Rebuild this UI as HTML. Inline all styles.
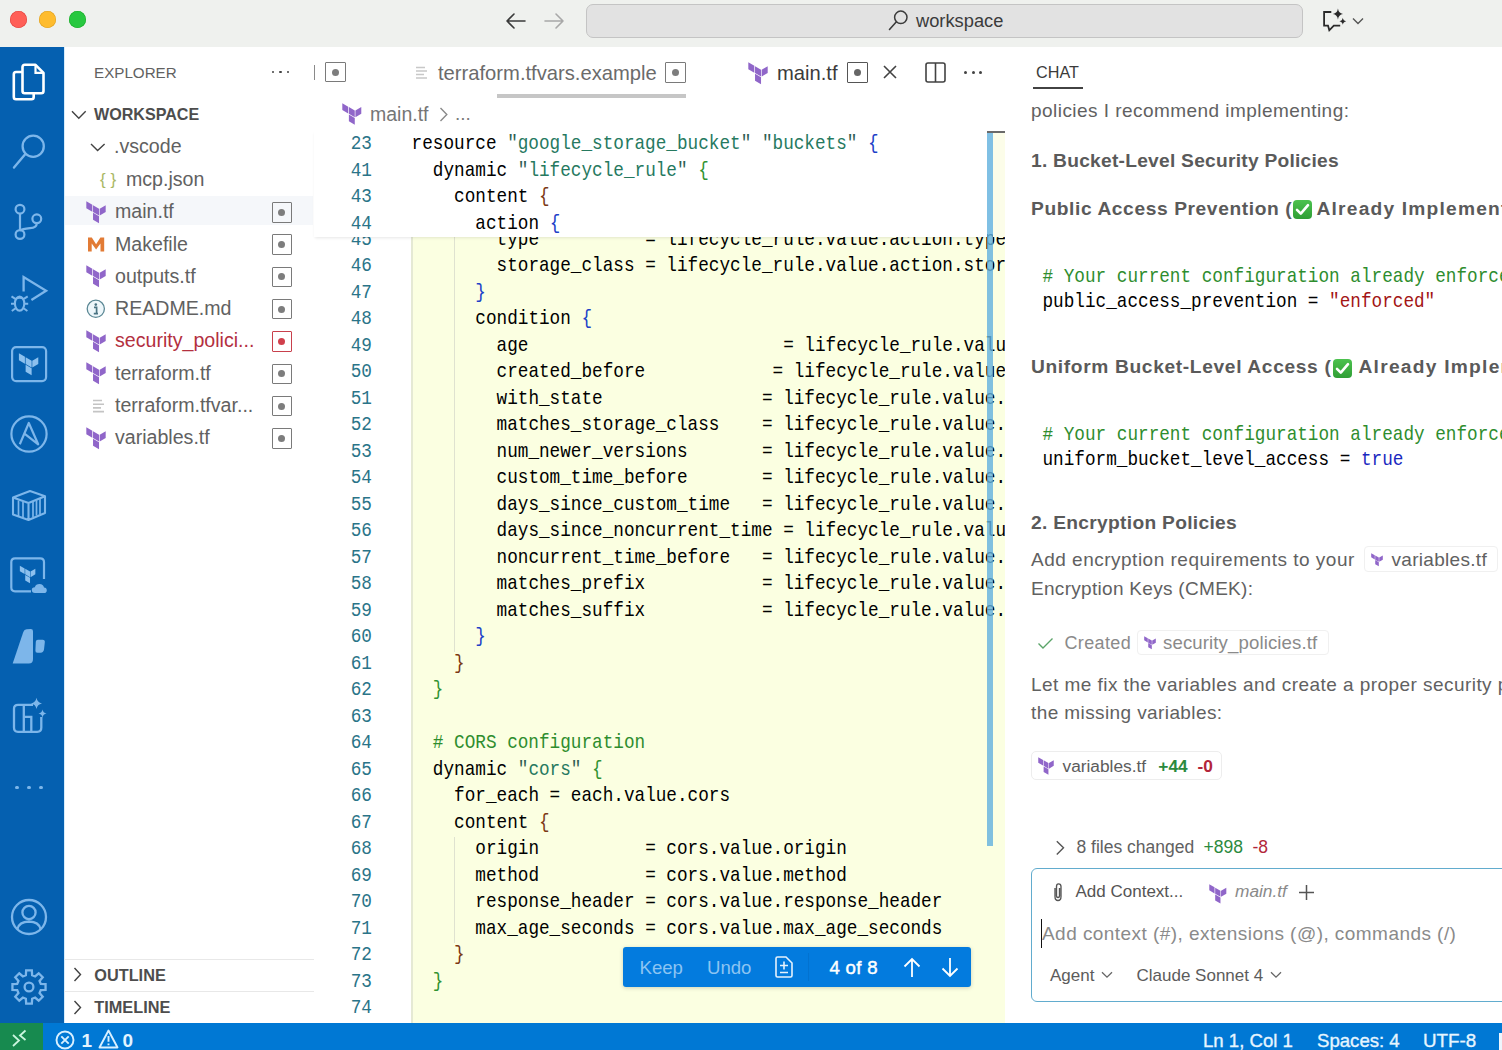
<!DOCTYPE html>
<html><head><meta charset="utf-8">
<style>
*{box-sizing:border-box;margin:0;padding:0}
html,body{width:1502px;height:1050px;overflow:hidden;background:#fff;font-family:"Liberation Sans",sans-serif}
body{position:relative}
.a{position:absolute}
.t{white-space:pre}
svg{overflow:visible}
</style></head><body>
<div class="a" style="left:0px;top:0px;width:1502px;height:47px;background:#eff1ee"></div>
<div class="a" style="left:9.6px;top:10.9px;width:17.4px;height:17.4px;border-radius:50%;background:#ff5f57;box-shadow:inset 0 0 0 0.6px #e0443e"></div>
<div class="a" style="left:39.1px;top:10.9px;width:17.4px;height:17.4px;border-radius:50%;background:#febc2e;box-shadow:inset 0 0 0 0.6px #dea123"></div>
<div class="a" style="left:68.5px;top:10.9px;width:17.4px;height:17.4px;border-radius:50%;background:#28c840;box-shadow:inset 0 0 0 0.6px #1aab29"></div>
<svg class="a" style="left:505px;top:12px;" width="22" height="18" viewBox="0 0 22 18"><path d="M2 9 H20 M9 2 L2 9 L9 16" fill="none" stroke="#3a3a3a" stroke-width="1.6" stroke-linecap="round" stroke-linejoin="round"/></svg>
<svg class="a" style="left:543px;top:12px;" width="22" height="18" viewBox="0 0 22 18"><path d="M2 9 H20 M13 2 L20 9 L13 16" fill="none" stroke="#a8a8a8" stroke-width="1.6" stroke-linecap="round" stroke-linejoin="round"/></svg>
<div class="a" style="left:585.5px;top:3.5px;width:717px;height:34px;background:#e2e2e2;border:1.5px solid #c4c4c4;border-radius:7px"></div>
<svg class="a" style="left:888px;top:9px;" width="20" height="22" viewBox="0 0 20 22"><circle cx="12.8" cy="8.3" r="6.2" fill="none" stroke="#3b3b3b" stroke-width="1.5"/><path d="M8.4 12.8 L1.5 20.5" stroke="#3b3b3b" stroke-width="1.6" stroke-linecap="round"/></svg>
<div class="a t" style="left:916px;top:8.76px;font-size:18.3px;line-height:23.79px;color:#3b3b3b;font-weight:400;font-family:'Liberation Sans';">workspace</div>
<svg class="a" style="left:1323px;top:8px;" width="26" height="24" viewBox="0 0 26 24"><path d="M8.3 4 H1.1 V17.6 H5 L6.3 22.3 L10.8 17.6 H17.2" fill="none" stroke="#2a2a2a" stroke-width="1.8" stroke-linejoin="miter"/><path d="M14.95 0.6 Q15.6 5.3 20 6 Q15.6 6.7 14.95 11.4 Q14.3 6.7 9.9 6 Q14.3 5.3 14.95 0.6Z" fill="#2a2a2a"/><path d="M19.8 9.8 Q20.2 12.8 23.2 13.3 Q20.2 13.8 19.8 16.8 Q19.4 13.8 16.4 13.3 Q19.4 12.8 19.8 9.8Z" fill="#2a2a2a"/></svg>
<svg class="a" style="left:1352px;top:17px;" width="12" height="8" viewBox="0 0 12 8"><path d="M1 1.5 L6 6.5 L11 1.5" fill="none" stroke="#555" stroke-width="1.4"/></svg>
<div class="a" style="left:0px;top:47px;width:64px;height:976px;background:#0560b0"></div>
<svg class="a" style="left:12px;top:63px;" width="34" height="38" viewBox="0 0 34 38"><path d="M10.5 9 H4 Q1.8 9 1.8 11.2 V34 Q1.8 36.2 4 36.2 H19.5 Q21.7 36.2 21.7 34 V30.5" fill="none" stroke="#fff" stroke-width="2.6"/><path d="M12.8 1.8 H23.5 L31.5 9.8 V28 Q31.5 30.3 29.2 30.3 H12.8 Q10.5 30.3 10.5 28 V4.1 Q10.5 1.8 12.8 1.8Z" fill="none" stroke="#fff" stroke-width="2.6" stroke-linejoin="round"/><path d="M23.5 1.8 V9.8 H31.5" fill="none" stroke="#fff" stroke-width="2.2"/></svg>
<svg class="a" style="left:12px;top:133px;" width="36" height="38" viewBox="0 0 36 38"><circle cx="21.2" cy="13.2" r="10.6" fill="none" stroke="#7db6ea" stroke-width="2.3"/><path d="M13.6 20.8 L2 34.6" stroke="#7db6ea" stroke-width="2.4" stroke-linecap="round"/></svg>
<svg class="a" style="left:13px;top:203px;" width="32" height="40" viewBox="0 0 32 40"><circle cx="7" cy="6.2" r="4.4" fill="none" stroke="#7db6ea" stroke-width="2.2"/><circle cx="7" cy="31.5" r="4.4" fill="none" stroke="#7db6ea" stroke-width="2.2"/><circle cx="23.8" cy="15.8" r="4.4" fill="none" stroke="#7db6ea" stroke-width="2.2"/><path d="M7 10.6 V27.1 M23.8 20.2 Q23.8 24.5 17 25.2 Q9 26 7 27.5" fill="none" stroke="#7db6ea" stroke-width="2.2"/></svg>
<svg class="a" style="left:0px;top:265px;" width="64" height="55" viewBox="0 0 64 55"><path d="M23.6 26.4 V12 L46.1 25.7 L31.4 35" fill="none" stroke="#7db6ea" stroke-width="2.3" stroke-linejoin="miter"/><ellipse cx="19.6" cy="38.6" rx="4.7" ry="7" fill="none" stroke="#7db6ea" stroke-width="2.1"/><path d="M15.5 34.3 Q19.6 31.3 23.7 34.3 M11.5 31.3 L15.3 33.8 M11 38.8 H14.9 M11.8 46 L15.6 43.3 M27.7 31.3 L23.9 33.8 M28.2 38.8 H24.3 M27.4 46 L23.6 43.3" fill="none" stroke="#7db6ea" stroke-width="2"/></svg>
<svg class="a" style="left:11px;top:346px;" width="37" height="37" viewBox="0 0 37 37"><rect x="1.1" y="1.1" width="34" height="34" rx="4" fill="none" stroke="#7db6ea" stroke-width="2.2"/><path transform="translate(7.6 7) scale(0.3125)" d="M1 1 V23.1 L20.2 34.2 V12.1Z M22.5 13.3 L41.7 24.4 V46.5 L22.5 35.4Z M43.8 24.4 V46.5 L63 35.4 V13.3Z M22.5 37.8 V59.9 L41.7 71 V48.9Z" fill="#8cc0ee"/></svg>
<svg class="a" style="left:9px;top:414px;" width="40" height="40" viewBox="0 0 40 40"><circle cx="20" cy="20" r="17.6" fill="none" stroke="#7db6ea" stroke-width="2.2"/><path d="M10.8 30.3 L19.8 9 L29.2 30.3 L15.8 19.8" fill="none" stroke="#7db6ea" stroke-width="2.2" stroke-linejoin="round"/></svg>
<svg class="a" style="left:10px;top:487px;" width="38" height="38" viewBox="0 0 38 38"><path d="M3 10.5 L20 4 L35 9.2 V26 L18.5 33 L3 27.5Z M3 10.5 L18.5 16 L35 9.2 M18.5 16 V33" fill="none" stroke="#7db6ea" stroke-width="2.1" stroke-linejoin="round"/><path d="M8.5 13.5 V29.5 M13 15 V31 M23 14.5 V30 M26.5 13.2 V28.6 M30 11.8 V27.2" stroke="#7db6ea" stroke-width="1.7"/></svg>
<svg class="a" style="left:10px;top:557px;" width="40" height="40" viewBox="0 0 40 40"><path d="M34 22 V5 Q34 1.3 30.3 1.3 H5 Q1.3 1.3 1.3 5 V30.6 Q1.3 34.3 5 34.3 H21" fill="none" stroke="#7db6ea" stroke-width="2.2"/><path transform="translate(9.6 8.5) scale(0.25)" d="M1 1 V23.1 L20.2 34.2 V12.1Z M22.5 13.3 L41.7 24.4 V46.5 L22.5 35.4Z M43.8 24.4 V46.5 L63 35.4 V13.3Z M22.5 37.8 V59.9 L41.7 71 V48.9Z" fill="#8cc0ee"/><path d="M25 36 Q21.8 36 21.8 33 Q21.8 30.3 24.8 30.2 Q25.8 27 29.5 27 Q33.3 27.2 34 30.4 Q36.8 30.6 36.8 33.2 Q36.8 36 34 36Z" fill="#7db6ea"/></svg>
<svg class="a" style="left:10px;top:627px;" width="40" height="40" viewBox="0 0 40 40"><path d="M2.7 36.5 L13.3 5 Q14.2 2.6 16.6 2.3 L20.6 1.9 Q23 1.8 23 4.2 V32 Q23 36.5 18.8 36.5 Z" fill="#7db6ea"/><path d="M27.8 12.8 H32.6 Q35.2 12.8 34.8 15.4 L34 22.6 Q33.6 25.7 30.6 25.7 H27.4 Q25.2 25.7 25.4 23.4 L25.8 14.8 Q26 12.8 27.8 12.8Z" fill="#7db6ea"/></svg>
<svg class="a" style="left:11px;top:697px;" width="38" height="40" viewBox="0 0 38 40"><path d="M22 7.8 H7 Q3 7.8 3 11.8 V30.8 Q3 34.8 7 34.8 H26.3 Q30.3 34.8 30.3 30.8 V20" fill="none" stroke="#7db6ea" stroke-width="2.3"/><path d="M12.8 7.8 V34.8 M12.8 19.8 H20.3 V34.8" fill="none" stroke="#7db6ea" stroke-width="2.3"/><path d="M25.5 0.8 Q26.3 5.6 31 6.4 Q26.3 7.2 25.5 12 Q24.7 7.2 20 6.4 Q24.7 5.6 25.5 0.8Z" fill="#7db6ea"/><path d="M31.5 12.5 Q32.1 16 35.5 16.6 Q32.1 17.2 31.5 20.7 Q30.9 17.2 27.5 16.6 Q30.9 16 31.5 12.5Z" fill="#7db6ea"/></svg>
<div class="a" style="left:15.4px;top:786.2px;width:3.2px;height:3.2px;background:#7db6ea;border-radius:50%"></div>
<div class="a" style="left:27.4px;top:786.2px;width:3.2px;height:3.2px;background:#7db6ea;border-radius:50%"></div>
<div class="a" style="left:39.4px;top:786.2px;width:3.2px;height:3.2px;background:#7db6ea;border-radius:50%"></div>
<svg class="a" style="left:10px;top:898px;" width="38" height="38" viewBox="0 0 38 38"><circle cx="19" cy="19" r="17" fill="none" stroke="#7db6ea" stroke-width="2.3"/><circle cx="19" cy="14.5" r="6.6" fill="none" stroke="#7db6ea" stroke-width="2.3"/><path d="M7.5 31 Q9 23.8 19 23.5 Q29 23.8 30.5 31" fill="none" stroke="#7db6ea" stroke-width="2.3"/></svg>
<svg class="a" style="left:10px;top:968px;" width="38" height="38" viewBox="0 0 38 38"><polygon points="15.86,7.21 16.16,2.44 21.84,2.44 22.14,7.21 25.12,8.45 28.70,5.28 32.72,9.30 29.55,12.88 30.79,15.86 35.56,16.16 35.56,21.84 30.79,22.14 29.55,25.12 32.72,28.70 28.70,32.72 25.12,29.55 22.14,30.79 21.84,35.56 16.16,35.56 15.86,30.79 12.88,29.55 9.30,32.72 5.28,28.70 8.45,25.12 7.21,22.14 2.44,21.84 2.44,16.16 7.21,15.86 8.45,12.88 5.28,9.30 9.30,5.28 12.88,8.45" fill="none" stroke="#7db6ea" stroke-width="2.3" stroke-linejoin="miter" transform="rotate(0 19 19)"/><circle cx="19" cy="19" r="4.4" fill="none" stroke="#7db6ea" stroke-width="2.3"/></svg>
<div class="a" style="left:64px;top:47px;width:250px;height:976px;background:#fff"></div>
<div class="a" style="left:64px;top:47px;width:1.2px;height:976px;background:#d6ecfb"></div>
<div class="a t" style="left:94px;top:63.05px;font-size:15.2px;line-height:19.76px;color:#616161;font-weight:400;font-family:'Liberation Sans';">EXPLORER</div>
<div class="a" style="left:271.6px;top:70.5px;width:2.8px;height:2.8px;background:#424242;border-radius:50%"></div>
<div class="a" style="left:279.1px;top:70.5px;width:2.8px;height:2.8px;background:#424242;border-radius:50%"></div>
<div class="a" style="left:286.6px;top:70.5px;width:2.8px;height:2.8px;background:#424242;border-radius:50%"></div>
<svg class="a" style="left:71px;top:110px;" width="16" height="10" viewBox="0 0 16 10"><path d="M1 1.3 L7.8 8.2 L14.7 1.3" fill="none" stroke="#424242" stroke-width="1.4"/></svg>
<div class="a t" style="left:94px;top:103.96px;font-size:16.1px;line-height:20.93px;color:#4d4d4d;font-weight:700;font-family:'Liberation Sans';">WORKSPACE</div>
<svg class="a" style="left:90px;top:142.5px;" width="16" height="10" viewBox="0 0 16 10"><path d="M1 1 L7.6 7.5 L14.6 1" fill="none" stroke="#424242" stroke-width="1.4"/></svg>
<div class="a t" style="left:114px;top:134.47px;font-size:19.6px;line-height:25.48px;color:#616161;font-weight:400;font-family:'Liberation Sans';">.vscode</div>
<div class="a t" style="left:100px;top:168.56px;font-size:17px;line-height:22.1px;color:#aab865;font-weight:400;font-family:'Liberation Sans';">{ }</div>
<div class="a t" style="left:126px;top:166.97px;font-size:19.6px;line-height:25.48px;color:#616161;font-weight:400;font-family:'Liberation Sans';">mcp.json</div>
<div class="a" style="left:65px;top:196px;width:248px;height:29px;background:#f5f7fa"></div>
<svg class="a" style="left:85.8px;top:200.5px" width="20.00" height="22.50" viewBox="0 0 64 72"><path d="M1 1 V23.1 L20.2 34.2 V12.1Z M22.5 13.3 L41.7 24.4 V46.5 L22.5 35.4Z M43.8 24.4 V46.5 L63 35.4 V13.3Z M22.5 37.8 V59.9 L41.7 71 V48.9Z" fill="#9066c9"/></svg>
<div class="a t" style="left:115px;top:199.27px;font-size:19.6px;line-height:25.48px;color:#616161;font-weight:400;font-family:'Liberation Sans';">main.tf</div>
<div class="a" style="left:271.5px;top:202.0px;width:20.5px;height:20.5px;border:1.6px solid #7a7a7a;border-radius:1px"></div>
<div class="a" style="left:278.25px;top:208.75px;width:7px;height:7px;border-radius:50%;background:#7d7d7d"></div>
<svg class="a" style="left:88px;top:236.5px;" width="16.2" height="14.4" viewBox="0 0 16.2 14.4"><path d="M0 14.4 V0.4 H3.8 L8.1 7.2 L12.4 0.4 H16.2 V14.4 H12.5 V6.6 L8.1 12.6 L3.7 6.6 V14.4 Z" fill="#e27b35"/></svg>
<div class="a t" style="left:115px;top:231.57px;font-size:19.6px;line-height:25.48px;color:#616161;font-weight:400;font-family:'Liberation Sans';">Makefile</div>
<div class="a" style="left:271.5px;top:234.29999999999998px;width:20.5px;height:20.5px;border:1.6px solid #7a7a7a;border-radius:1px"></div>
<div class="a" style="left:278.25px;top:241.04999999999998px;width:7px;height:7px;border-radius:50%;background:#7d7d7d"></div>
<svg class="a" style="left:85.8px;top:265.09999999999997px" width="20.00" height="22.50" viewBox="0 0 64 72"><path d="M1 1 V23.1 L20.2 34.2 V12.1Z M22.5 13.3 L41.7 24.4 V46.5 L22.5 35.4Z M43.8 24.4 V46.5 L63 35.4 V13.3Z M22.5 37.8 V59.9 L41.7 71 V48.9Z" fill="#9066c9"/></svg>
<div class="a t" style="left:115px;top:263.87px;font-size:19.6px;line-height:25.48px;color:#616161;font-weight:400;font-family:'Liberation Sans';">outputs.tf</div>
<div class="a" style="left:271.5px;top:266.59999999999997px;width:20.5px;height:20.5px;border:1.6px solid #7a7a7a;border-radius:1px"></div>
<div class="a" style="left:278.25px;top:273.34999999999997px;width:7px;height:7px;border-radius:50%;background:#7d7d7d"></div>
<svg class="a" style="left:86px;top:299.4px;" width="20" height="20" viewBox="0 0 20 20"><circle cx="9.8" cy="9.8" r="8.6" fill="#eef7fb" stroke="#5a8794" stroke-width="1.3"/><circle cx="9.8" cy="5.6" r="1.3" fill="#4a7483"/><path d="M8 8.4 H10.6 V14.3 M7.8 14.6 H12" fill="none" stroke="#4a7483" stroke-width="1.7"/></svg>
<div class="a t" style="left:115px;top:296.17px;font-size:19.6px;line-height:25.48px;color:#616161;font-weight:400;font-family:'Liberation Sans';">README.md</div>
<div class="a" style="left:271.5px;top:298.9px;width:20.5px;height:20.5px;border:1.6px solid #7a7a7a;border-radius:1px"></div>
<div class="a" style="left:278.25px;top:305.65px;width:7px;height:7px;border-radius:50%;background:#7d7d7d"></div>
<svg class="a" style="left:85.8px;top:329.7px" width="20.00" height="22.50" viewBox="0 0 64 72"><path d="M1 1 V23.1 L20.2 34.2 V12.1Z M22.5 13.3 L41.7 24.4 V46.5 L22.5 35.4Z M43.8 24.4 V46.5 L63 35.4 V13.3Z M22.5 37.8 V59.9 L41.7 71 V48.9Z" fill="#9066c9"/></svg>
<div class="a t" style="left:115px;top:328.47px;font-size:19.6px;line-height:25.48px;color:#b3303f;font-weight:400;font-family:'Liberation Sans';">security_polici...</div>
<div class="a" style="left:271.5px;top:331.2px;width:20.5px;height:20.5px;border:1.6px solid #c8404c;border-radius:1px"></div>
<div class="a" style="left:278.25px;top:337.95px;width:7px;height:7px;border-radius:50%;background:#d0404c"></div>
<svg class="a" style="left:85.8px;top:362.0px" width="20.00" height="22.50" viewBox="0 0 64 72"><path d="M1 1 V23.1 L20.2 34.2 V12.1Z M22.5 13.3 L41.7 24.4 V46.5 L22.5 35.4Z M43.8 24.4 V46.5 L63 35.4 V13.3Z M22.5 37.8 V59.9 L41.7 71 V48.9Z" fill="#9066c9"/></svg>
<div class="a t" style="left:115px;top:360.77px;font-size:19.6px;line-height:25.48px;color:#616161;font-weight:400;font-family:'Liberation Sans';">terraform.tf</div>
<div class="a" style="left:271.5px;top:363.5px;width:20.5px;height:20.5px;border:1.6px solid #7a7a7a;border-radius:1px"></div>
<div class="a" style="left:278.25px;top:370.25px;width:7px;height:7px;border-radius:50%;background:#7d7d7d"></div>
<svg class="a" style="left:92px;top:398.8px;" width="14" height="14" viewBox="0 0 14 14"><path d="M1 1.5 H10 M1 5.2 H12 M1 8.9 H9 M1 12.6 H12" stroke="#c4c4c4" stroke-width="1.6"/></svg>
<div class="a t" style="left:115px;top:393.07px;font-size:19.6px;line-height:25.48px;color:#616161;font-weight:400;font-family:'Liberation Sans';">terraform.tfvar...</div>
<div class="a" style="left:271.5px;top:395.8px;width:20.5px;height:20.5px;border:1.6px solid #7a7a7a;border-radius:1px"></div>
<div class="a" style="left:278.25px;top:402.55px;width:7px;height:7px;border-radius:50%;background:#7d7d7d"></div>
<svg class="a" style="left:85.8px;top:426.59999999999997px" width="20.00" height="22.50" viewBox="0 0 64 72"><path d="M1 1 V23.1 L20.2 34.2 V12.1Z M22.5 13.3 L41.7 24.4 V46.5 L22.5 35.4Z M43.8 24.4 V46.5 L63 35.4 V13.3Z M22.5 37.8 V59.9 L41.7 71 V48.9Z" fill="#9066c9"/></svg>
<div class="a t" style="left:115px;top:425.37px;font-size:19.6px;line-height:25.48px;color:#616161;font-weight:400;font-family:'Liberation Sans';">variables.tf</div>
<div class="a" style="left:271.5px;top:428.09999999999997px;width:20.5px;height:20.5px;border:1.6px solid #7a7a7a;border-radius:1px"></div>
<div class="a" style="left:278.25px;top:434.84999999999997px;width:7px;height:7px;border-radius:50%;background:#7d7d7d"></div>
<div class="a" style="left:64px;top:958.5px;width:250px;height:1px;background:#e8e8e8"></div>
<div class="a" style="left:64px;top:990.8px;width:250px;height:1px;background:#e8e8e8"></div>
<svg class="a" style="left:73px;top:967px;" width="10" height="16" viewBox="0 0 10 16"><path d="M1.5 1 L7.5 7.5 L1.5 14" fill="none" stroke="#424242" stroke-width="1.4"/></svg>
<div class="a t" style="left:94.3px;top:964.76px;font-size:16.3px;line-height:21.19px;color:#4d4d4d;font-weight:700;font-family:'Liberation Sans';">OUTLINE</div>
<svg class="a" style="left:73px;top:999.5px;" width="10" height="16" viewBox="0 0 10 16"><path d="M1.5 1 L7.5 7.5 L1.5 14" fill="none" stroke="#424242" stroke-width="1.4"/></svg>
<div class="a t" style="left:94.3px;top:997.16px;font-size:16.3px;line-height:21.19px;color:#4d4d4d;font-weight:700;font-family:'Liberation Sans';">TIMELINE</div>
<div class="a" style="left:314px;top:47px;width:691px;height:976px;background:#fff"></div>
<div class="a" style="left:313.5px;top:65px;width:1.5px;height:14.5px;background:#8a8a8a"></div>
<div class="a" style="left:325.2px;top:61.8px;width:20.5px;height:20.5px;border:1.6px solid #7a7a7a;border-radius:1px"></div>
<div class="a" style="left:331.95px;top:68.55px;width:7px;height:7px;border-radius:50%;background:#7d7d7d"></div>
<svg class="a" style="left:415px;top:65.5px;" width="14" height="14" viewBox="0 0 14 14"><path d="M1 1.5 H10 M1 5 H12 M1 8.5 H9 M1 12 H12" stroke="#c8c8c8" stroke-width="1.6"/></svg>
<div class="a t" style="left:438px;top:59.57px;font-size:20.2px;line-height:26.26px;color:#6b6b6b;font-weight:400;font-family:'Liberation Sans';">terraform.tfvars.example</div>
<div class="a" style="left:665.3px;top:62.3px;width:20.5px;height:20.5px;border:1.6px solid #7a7a7a;border-radius:1px"></div>
<div class="a" style="left:672.05px;top:69.05px;width:7px;height:7px;border-radius:50%;background:#7d7d7d"></div>
<div class="a" style="left:496.5px;top:93.8px;width:189.5px;height:4px;background:#c6c6c6"></div>
<svg class="a" style="left:747.5px;top:61.7px" width="20.00" height="22.50" viewBox="0 0 64 72"><path d="M1 1 V23.1 L20.2 34.2 V12.1Z M22.5 13.3 L41.7 24.4 V46.5 L22.5 35.4Z M43.8 24.4 V46.5 L63 35.4 V13.3Z M22.5 37.8 V59.9 L41.7 71 V48.9Z" fill="#9066c9"/></svg>
<div class="a t" style="left:777px;top:59.57px;font-size:20.2px;line-height:26.26px;color:#3b3b3b;font-weight:400;font-family:'Liberation Sans';">main.tf</div>
<div class="a" style="left:847px;top:62.3px;width:20.5px;height:20.5px;border:1.6px solid #555;border-radius:1px"></div>
<div class="a" style="left:853.75px;top:69.05px;width:7px;height:7px;border-radius:50%;background:#666"></div>
<svg class="a" style="left:882.5px;top:65px;" width="14" height="14" viewBox="0 0 14 14"><path d="M1 1 L13 13 M13 1 L1 13" stroke="#424242" stroke-width="1.6"/></svg>
<svg class="a" style="left:925px;top:61.5px;" width="21" height="21" viewBox="0 0 21 21"><rect x="1" y="1" width="19" height="19" rx="2" fill="none" stroke="#424242" stroke-width="1.6"/><path d="M10.5 1 V20" stroke="#424242" stroke-width="1.6"/></svg>
<div class="a" style="left:964.0px;top:70.5px;width:3px;height:3px;background:#424242;border-radius:50%"></div>
<div class="a" style="left:971.5px;top:70.5px;width:3px;height:3px;background:#424242;border-radius:50%"></div>
<div class="a" style="left:979.0px;top:70.5px;width:3px;height:3px;background:#424242;border-radius:50%"></div>
<svg class="a" style="left:342px;top:102.5px" width="19.60" height="22.05" viewBox="0 0 64 72"><path d="M1 1 V23.1 L20.2 34.2 V12.1Z M22.5 13.3 L41.7 24.4 V46.5 L22.5 35.4Z M43.8 24.4 V46.5 L63 35.4 V13.3Z M22.5 37.8 V59.9 L41.7 71 V48.9Z" fill="#9066c9"/></svg>
<div class="a t" style="left:370px;top:102.17px;font-size:19.5px;line-height:25.35px;color:#767676;font-weight:400;font-family:'Liberation Sans';">main.tf</div>
<svg class="a" style="left:439px;top:106.5px;" width="10" height="16" viewBox="0 0 10 16"><path d="M1.5 1 L7.8 7.5 L1.5 14" fill="none" stroke="#8a8a8a" stroke-width="1.4"/></svg>
<div class="a t" style="left:455px;top:102.47px;font-size:19px;line-height:24.7px;color:#7a7a7a;font-weight:400;font-family:'Liberation Sans';">...</div>
<div class="a" style="left:411px;top:237px;width:594px;height:786px;background:#fbffe1"></div>
<div class="a" style="left:411px;top:237px;width:2px;height:786px;background:#e5e9d4"></div>
<div class="a" style="left:453.8px;top:237px;width:1px;height:414.79999999999995px;background:#dfe2d0"></div>
<div class="a" style="left:453.8px;top:837.3px;width:1px;height:106.0px;background:#dfe2d0"></div>
<div class="a" style="left:314px;top:130px;width:691px;height:893px;overflow:hidden">
<div class="a t" style="left:36.76px;top:98.89px;font-size:17.700px;line-height:23.01px;color:#2a7488;font-family:'Liberation Mono';transform:scaleY(1.12);transform-origin:0 16.21px">45</div>
<div class="a t" style="left:182.56px;top:98.89px;font-size:17.7px;line-height:23.01px;color:#000;font-weight:400;font-family:'Liberation Mono';transform:scaleY(1.12);transform-origin:0 16.21px;"><span style="color:#000000">type          = lifecycle_rule.value.action.type</span></div>
<div class="a t" style="left:36.76px;top:125.39px;font-size:17.700px;line-height:23.01px;color:#2a7488;font-family:'Liberation Mono';transform:scaleY(1.12);transform-origin:0 16.21px">46</div>
<div class="a t" style="left:182.56px;top:125.39px;font-size:17.7px;line-height:23.01px;color:#000;font-weight:400;font-family:'Liberation Mono';transform:scaleY(1.12);transform-origin:0 16.21px;"><span style="color:#000000">storage_class = lifecycle_rule.value.action.storage_class</span></div>
<div class="a t" style="left:36.76px;top:151.89px;font-size:17.700px;line-height:23.01px;color:#2a7488;font-family:'Liberation Mono';transform:scaleY(1.12);transform-origin:0 16.21px">47</div>
<div class="a t" style="left:161.32px;top:151.89px;font-size:17.7px;line-height:23.01px;color:#000;font-weight:400;font-family:'Liberation Mono';transform:scaleY(1.12);transform-origin:0 16.21px;"><span style="color:#2040c8">}</span></div>
<div class="a t" style="left:36.76px;top:178.39px;font-size:17.700px;line-height:23.01px;color:#2a7488;font-family:'Liberation Mono';transform:scaleY(1.12);transform-origin:0 16.21px">48</div>
<div class="a t" style="left:161.32px;top:178.39px;font-size:17.7px;line-height:23.01px;color:#000;font-weight:400;font-family:'Liberation Mono';transform:scaleY(1.12);transform-origin:0 16.21px;"><span style="color:#000000">condition </span><span style="color:#2040c8">{</span></div>
<div class="a t" style="left:36.76px;top:204.89px;font-size:17.700px;line-height:23.01px;color:#2a7488;font-family:'Liberation Mono';transform:scaleY(1.12);transform-origin:0 16.21px">49</div>
<div class="a t" style="left:182.56px;top:204.89px;font-size:17.7px;line-height:23.01px;color:#000;font-weight:400;font-family:'Liberation Mono';transform:scaleY(1.12);transform-origin:0 16.21px;"><span style="color:#000000">age                        = lifecycle_rule.value.condition.age</span></div>
<div class="a t" style="left:36.76px;top:231.39px;font-size:17.700px;line-height:23.01px;color:#2a7488;font-family:'Liberation Mono';transform:scaleY(1.12);transform-origin:0 16.21px">50</div>
<div class="a t" style="left:182.56px;top:231.39px;font-size:17.7px;line-height:23.01px;color:#000;font-weight:400;font-family:'Liberation Mono';transform:scaleY(1.12);transform-origin:0 16.21px;"><span style="color:#000000">created_before            = lifecycle_rule.value.condition.created_before</span></div>
<div class="a t" style="left:36.76px;top:257.89px;font-size:17.700px;line-height:23.01px;color:#2a7488;font-family:'Liberation Mono';transform:scaleY(1.12);transform-origin:0 16.21px">51</div>
<div class="a t" style="left:182.56px;top:257.89px;font-size:17.7px;line-height:23.01px;color:#000;font-weight:400;font-family:'Liberation Mono';transform:scaleY(1.12);transform-origin:0 16.21px;"><span style="color:#000000">with_state               = lifecycle_rule.value.condition.with_state</span></div>
<div class="a t" style="left:36.76px;top:284.39px;font-size:17.700px;line-height:23.01px;color:#2a7488;font-family:'Liberation Mono';transform:scaleY(1.12);transform-origin:0 16.21px">52</div>
<div class="a t" style="left:182.56px;top:284.39px;font-size:17.7px;line-height:23.01px;color:#000;font-weight:400;font-family:'Liberation Mono';transform:scaleY(1.12);transform-origin:0 16.21px;"><span style="color:#000000">matches_storage_class    = lifecycle_rule.value.condition.matches_storage_class</span></div>
<div class="a t" style="left:36.76px;top:310.89px;font-size:17.700px;line-height:23.01px;color:#2a7488;font-family:'Liberation Mono';transform:scaleY(1.12);transform-origin:0 16.21px">53</div>
<div class="a t" style="left:182.56px;top:310.89px;font-size:17.7px;line-height:23.01px;color:#000;font-weight:400;font-family:'Liberation Mono';transform:scaleY(1.12);transform-origin:0 16.21px;"><span style="color:#000000">num_newer_versions       = lifecycle_rule.value.condition.num_newer_versions</span></div>
<div class="a t" style="left:36.76px;top:337.39px;font-size:17.700px;line-height:23.01px;color:#2a7488;font-family:'Liberation Mono';transform:scaleY(1.12);transform-origin:0 16.21px">54</div>
<div class="a t" style="left:182.56px;top:337.39px;font-size:17.7px;line-height:23.01px;color:#000;font-weight:400;font-family:'Liberation Mono';transform:scaleY(1.12);transform-origin:0 16.21px;"><span style="color:#000000">custom_time_before       = lifecycle_rule.value.condition.custom_time_before</span></div>
<div class="a t" style="left:36.76px;top:363.89px;font-size:17.700px;line-height:23.01px;color:#2a7488;font-family:'Liberation Mono';transform:scaleY(1.12);transform-origin:0 16.21px">55</div>
<div class="a t" style="left:182.56px;top:363.89px;font-size:17.7px;line-height:23.01px;color:#000;font-weight:400;font-family:'Liberation Mono';transform:scaleY(1.12);transform-origin:0 16.21px;"><span style="color:#000000">days_since_custom_time   = lifecycle_rule.value.condition.days_since_custom_time</span></div>
<div class="a t" style="left:36.76px;top:390.39px;font-size:17.700px;line-height:23.01px;color:#2a7488;font-family:'Liberation Mono';transform:scaleY(1.12);transform-origin:0 16.21px">56</div>
<div class="a t" style="left:182.56px;top:390.39px;font-size:17.7px;line-height:23.01px;color:#000;font-weight:400;font-family:'Liberation Mono';transform:scaleY(1.12);transform-origin:0 16.21px;"><span style="color:#000000">days_since_noncurrent_time = lifecycle_rule.value.condition.days_since_noncurrent_time</span></div>
<div class="a t" style="left:36.76px;top:416.89px;font-size:17.700px;line-height:23.01px;color:#2a7488;font-family:'Liberation Mono';transform:scaleY(1.12);transform-origin:0 16.21px">57</div>
<div class="a t" style="left:182.56px;top:416.89px;font-size:17.7px;line-height:23.01px;color:#000;font-weight:400;font-family:'Liberation Mono';transform:scaleY(1.12);transform-origin:0 16.21px;"><span style="color:#000000">noncurrent_time_before   = lifecycle_rule.value.condition.noncurrent_time_before</span></div>
<div class="a t" style="left:36.76px;top:443.39px;font-size:17.700px;line-height:23.01px;color:#2a7488;font-family:'Liberation Mono';transform:scaleY(1.12);transform-origin:0 16.21px">58</div>
<div class="a t" style="left:182.56px;top:443.39px;font-size:17.7px;line-height:23.01px;color:#000;font-weight:400;font-family:'Liberation Mono';transform:scaleY(1.12);transform-origin:0 16.21px;"><span style="color:#000000">matches_prefix           = lifecycle_rule.value.condition.matches_prefix</span></div>
<div class="a t" style="left:36.76px;top:469.89px;font-size:17.700px;line-height:23.01px;color:#2a7488;font-family:'Liberation Mono';transform:scaleY(1.12);transform-origin:0 16.21px">59</div>
<div class="a t" style="left:182.56px;top:469.89px;font-size:17.7px;line-height:23.01px;color:#000;font-weight:400;font-family:'Liberation Mono';transform:scaleY(1.12);transform-origin:0 16.21px;"><span style="color:#000000">matches_suffix           = lifecycle_rule.value.condition.matches_suffix</span></div>
<div class="a t" style="left:36.76px;top:496.39px;font-size:17.700px;line-height:23.01px;color:#2a7488;font-family:'Liberation Mono';transform:scaleY(1.12);transform-origin:0 16.21px">60</div>
<div class="a t" style="left:161.32px;top:496.39px;font-size:17.7px;line-height:23.01px;color:#000;font-weight:400;font-family:'Liberation Mono';transform:scaleY(1.12);transform-origin:0 16.21px;"><span style="color:#2040c8">}</span></div>
<div class="a t" style="left:36.76px;top:522.89px;font-size:17.700px;line-height:23.01px;color:#2a7488;font-family:'Liberation Mono';transform:scaleY(1.12);transform-origin:0 16.21px">61</div>
<div class="a t" style="left:140.08px;top:522.89px;font-size:17.7px;line-height:23.01px;color:#000;font-weight:400;font-family:'Liberation Mono';transform:scaleY(1.12);transform-origin:0 16.21px;"><span style="color:#7b3814">}</span></div>
<div class="a t" style="left:36.76px;top:549.39px;font-size:17.700px;line-height:23.01px;color:#2a7488;font-family:'Liberation Mono';transform:scaleY(1.12);transform-origin:0 16.21px">62</div>
<div class="a t" style="left:118.84px;top:549.39px;font-size:17.7px;line-height:23.01px;color:#000;font-weight:400;font-family:'Liberation Mono';transform:scaleY(1.12);transform-origin:0 16.21px;"><span style="color:#319331">}</span></div>
<div class="a t" style="left:36.76px;top:575.89px;font-size:17.700px;line-height:23.01px;color:#2a7488;font-family:'Liberation Mono';transform:scaleY(1.12);transform-origin:0 16.21px">63</div>
<div class="a t" style="left:36.76px;top:602.39px;font-size:17.700px;line-height:23.01px;color:#2a7488;font-family:'Liberation Mono';transform:scaleY(1.12);transform-origin:0 16.21px">64</div>
<div class="a t" style="left:118.84px;top:602.39px;font-size:17.7px;line-height:23.01px;color:#000;font-weight:400;font-family:'Liberation Mono';transform:scaleY(1.12);transform-origin:0 16.21px;"><span style="color:#2e8d2e"># CORS configuration</span></div>
<div class="a t" style="left:36.76px;top:628.89px;font-size:17.700px;line-height:23.01px;color:#2a7488;font-family:'Liberation Mono';transform:scaleY(1.12);transform-origin:0 16.21px">65</div>
<div class="a t" style="left:118.84px;top:628.89px;font-size:17.7px;line-height:23.01px;color:#000;font-weight:400;font-family:'Liberation Mono';transform:scaleY(1.12);transform-origin:0 16.21px;"><span style="color:#000000">dynamic </span><span style="color:#2f5f55">&quot;</span><span style="color:#26795f">cors</span><span style="color:#2f5f55">&quot;</span><span style="color:#000000"> </span><span style="color:#319331">{</span></div>
<div class="a t" style="left:36.76px;top:655.39px;font-size:17.700px;line-height:23.01px;color:#2a7488;font-family:'Liberation Mono';transform:scaleY(1.12);transform-origin:0 16.21px">66</div>
<div class="a t" style="left:140.08px;top:655.39px;font-size:17.7px;line-height:23.01px;color:#000;font-weight:400;font-family:'Liberation Mono';transform:scaleY(1.12);transform-origin:0 16.21px;"><span style="color:#000000">for_each = each.value.cors</span></div>
<div class="a t" style="left:36.76px;top:681.89px;font-size:17.700px;line-height:23.01px;color:#2a7488;font-family:'Liberation Mono';transform:scaleY(1.12);transform-origin:0 16.21px">67</div>
<div class="a t" style="left:140.08px;top:681.89px;font-size:17.7px;line-height:23.01px;color:#000;font-weight:400;font-family:'Liberation Mono';transform:scaleY(1.12);transform-origin:0 16.21px;"><span style="color:#000000">content </span><span style="color:#7b3814">{</span></div>
<div class="a t" style="left:36.76px;top:708.39px;font-size:17.700px;line-height:23.01px;color:#2a7488;font-family:'Liberation Mono';transform:scaleY(1.12);transform-origin:0 16.21px">68</div>
<div class="a t" style="left:161.32px;top:708.39px;font-size:17.7px;line-height:23.01px;color:#000;font-weight:400;font-family:'Liberation Mono';transform:scaleY(1.12);transform-origin:0 16.21px;"><span style="color:#000000">origin          = cors.value.origin</span></div>
<div class="a t" style="left:36.76px;top:734.89px;font-size:17.700px;line-height:23.01px;color:#2a7488;font-family:'Liberation Mono';transform:scaleY(1.12);transform-origin:0 16.21px">69</div>
<div class="a t" style="left:161.32px;top:734.89px;font-size:17.7px;line-height:23.01px;color:#000;font-weight:400;font-family:'Liberation Mono';transform:scaleY(1.12);transform-origin:0 16.21px;"><span style="color:#000000">method          = cors.value.method</span></div>
<div class="a t" style="left:36.76px;top:761.39px;font-size:17.700px;line-height:23.01px;color:#2a7488;font-family:'Liberation Mono';transform:scaleY(1.12);transform-origin:0 16.21px">70</div>
<div class="a t" style="left:161.32px;top:761.39px;font-size:17.7px;line-height:23.01px;color:#000;font-weight:400;font-family:'Liberation Mono';transform:scaleY(1.12);transform-origin:0 16.21px;"><span style="color:#000000">response_header = cors.value.response_header</span></div>
<div class="a t" style="left:36.76px;top:787.89px;font-size:17.700px;line-height:23.01px;color:#2a7488;font-family:'Liberation Mono';transform:scaleY(1.12);transform-origin:0 16.21px">71</div>
<div class="a t" style="left:161.32px;top:787.89px;font-size:17.7px;line-height:23.01px;color:#000;font-weight:400;font-family:'Liberation Mono';transform:scaleY(1.12);transform-origin:0 16.21px;"><span style="color:#000000">max_age_seconds = cors.value.max_age_seconds</span></div>
<div class="a t" style="left:36.76px;top:814.39px;font-size:17.700px;line-height:23.01px;color:#2a7488;font-family:'Liberation Mono';transform:scaleY(1.12);transform-origin:0 16.21px">72</div>
<div class="a t" style="left:140.08px;top:814.39px;font-size:17.7px;line-height:23.01px;color:#000;font-weight:400;font-family:'Liberation Mono';transform:scaleY(1.12);transform-origin:0 16.21px;"><span style="color:#7b3814">}</span></div>
<div class="a t" style="left:36.76px;top:840.89px;font-size:17.700px;line-height:23.01px;color:#2a7488;font-family:'Liberation Mono';transform:scaleY(1.12);transform-origin:0 16.21px">73</div>
<div class="a t" style="left:118.84px;top:840.89px;font-size:17.7px;line-height:23.01px;color:#000;font-weight:400;font-family:'Liberation Mono';transform:scaleY(1.12);transform-origin:0 16.21px;"><span style="color:#319331">}</span></div>
<div class="a t" style="left:36.76px;top:867.39px;font-size:17.700px;line-height:23.01px;color:#2a7488;font-family:'Liberation Mono';transform:scaleY(1.12);transform-origin:0 16.21px">74</div>
</div>
<div class="a" style="left:314px;top:130px;width:673px;height:107px;background:#fff;box-shadow:0 2px 3px -1px rgba(0,0,0,0.10)"></div>
<div class="a t" style="left:350.76px;top:133.09px;font-size:17.700px;line-height:23.01px;color:#2a7488;font-family:'Liberation Mono';transform:scaleY(1.12);transform-origin:0 16.21px">23</div>
<div class="a t" style="left:411.6px;top:133.09px;font-size:17.7px;line-height:23.01px;color:#000;font-weight:400;font-family:'Liberation Mono';transform:scaleY(1.12);transform-origin:0 16.21px;"><span style="color:#000000">resource </span><span style="color:#2f5f55">&quot;</span><span style="color:#26795f">google_storage_bucket</span><span style="color:#2f5f55">&quot;</span><span style="color:#000000"> </span><span style="color:#2f5f55">&quot;</span><span style="color:#26795f">buckets</span><span style="color:#2f5f55">&quot;</span><span style="color:#000000"> </span><span style="color:#2040c8">{</span></div>
<div class="a t" style="left:350.76px;top:159.59px;font-size:17.700px;line-height:23.01px;color:#2a7488;font-family:'Liberation Mono';transform:scaleY(1.12);transform-origin:0 16.21px">41</div>
<div class="a t" style="left:432.84000000000003px;top:159.59px;font-size:17.7px;line-height:23.01px;color:#000;font-weight:400;font-family:'Liberation Mono';transform:scaleY(1.12);transform-origin:0 16.21px;"><span style="color:#000000">dynamic </span><span style="color:#2f5f55">&quot;</span><span style="color:#26795f">lifecycle_rule</span><span style="color:#2f5f55">&quot;</span><span style="color:#000000"> </span><span style="color:#319331">{</span></div>
<div class="a t" style="left:350.76px;top:186.09px;font-size:17.700px;line-height:23.01px;color:#2a7488;font-family:'Liberation Mono';transform:scaleY(1.12);transform-origin:0 16.21px">43</div>
<div class="a t" style="left:454.08000000000004px;top:186.09px;font-size:17.7px;line-height:23.01px;color:#000;font-weight:400;font-family:'Liberation Mono';transform:scaleY(1.12);transform-origin:0 16.21px;"><span style="color:#000000">content </span><span style="color:#7b3814">{</span></div>
<div class="a t" style="left:350.76px;top:212.59px;font-size:17.700px;line-height:23.01px;color:#2a7488;font-family:'Liberation Mono';transform:scaleY(1.12);transform-origin:0 16.21px">44</div>
<div class="a t" style="left:475.32000000000005px;top:212.59px;font-size:17.7px;line-height:23.01px;color:#000;font-weight:400;font-family:'Liberation Mono';transform:scaleY(1.12);transform-origin:0 16.21px;"><span style="color:#000000">action </span><span style="color:#2040c8">{</span></div>
<div class="a" style="left:993px;top:132px;width:12px;height:105px;background:#fcfde9"></div>
<div class="a" style="left:987px;top:132px;width:6.3px;height:714px;background:rgba(100,178,222,0.82)"></div>
<div class="a" style="left:987px;top:131px;width:19px;height:2.2px;background:#6a6a6a"></div>
<div class="a" style="left:622.5px;top:946.5px;width:348.5px;height:40.5px;background:#037bde;border-radius:3px;box-shadow:0 1px 4px rgba(0,0,0,0.18)"></div>
<div class="a t" style="left:639.5px;top:956.07px;font-size:18.6px;line-height:24.18px;color:#8cc4f2;font-weight:400;font-family:'Liberation Sans';">Keep</div>
<div class="a t" style="left:707px;top:956.07px;font-size:18.6px;line-height:24.18px;color:#8cc4f2;font-weight:400;font-family:'Liberation Sans';">Undo</div>
<svg class="a" style="left:774px;top:956px;" width="20" height="22" viewBox="0 0 20 22"><path d="M2 2.5 Q2 1 3.5 1 H12 L18 7 V19.5 Q18 21 16.5 21 H3.5 Q2 21 2 19.5Z" fill="none" stroke="#e6f2fc" stroke-width="1.6"/><path d="M6 9.5 H14 M10 5.5 V13.5 M6 16.5 H14" stroke="#e6f2fc" stroke-width="1.6"/></svg>
<div class="a" style="left:808px;top:953px;width:1px;height:28px;background:rgba(0,40,90,0.10)"></div>
<div class="a t" style="left:829.5px;top:956.07px;font-size:18.6px;line-height:24.18px;color:#ffffff;font-weight:400;font-family:'Liberation Sans';letter-spacing:0.3px;-webkit-text-stroke:0.45px #fff">4 of 8</div>
<svg class="a" style="left:902px;top:956.5px;" width="20" height="21" viewBox="0 0 20 21"><path d="M10 2 V20 M2.5 9.5 L10 2 L17.5 9.5" fill="none" stroke="#fff" stroke-width="1.8"/></svg>
<svg class="a" style="left:940px;top:956.5px;" width="20" height="21" viewBox="0 0 20 21"><path d="M10 1 V19 M2.5 11.5 L10 19 L17.5 11.5" fill="none" stroke="#fff" stroke-width="1.8"/></svg>
<div class="a" style="left:1005px;top:47px;width:497px;height:976px;background:#fff"></div>
<div class="a t" style="left:1036px;top:61.86px;font-size:16.2px;line-height:21.06px;color:#3b3b3b;font-weight:400;font-family:'Liberation Sans';">CHAT</div>
<div class="a" style="left:1033px;top:87.2px;width:50px;height:2px;background:#424242"></div>
<div class="a t" style="left:1031px;top:98.87px;font-size:19px;line-height:24.7px;color:#616161;font-weight:400;font-family:'Liberation Sans';letter-spacing:0.45px;">policies I recommend implementing:</div>
<div class="a t" style="left:1031px;top:148.77px;font-size:19.2px;line-height:24.96px;color:#5a5a5a;font-weight:700;font-family:'Liberation Sans';letter-spacing:0.25px;">1. Bucket-Level Security Policies</div>
<div class="a t" style="left:1031px;top:196.97px;font-size:19.2px;line-height:24.96px;color:#5a5a5a;font-weight:700;font-family:'Liberation Sans';letter-spacing:0.6px;">Public Access Prevention (</div>
<div class="a" style="left:1292.5px;top:200px;width:19px;height:19px;border-radius:4px;background:linear-gradient(#4cc24f,#2f9e35)"></div>
<svg class="a" style="left:1292.5px;top:200px" width="19" height="19" viewBox="0 0 19 19"><path d="M4 9.8 L7.8 13.6 L15 5.2" fill="none" stroke="#fff" stroke-width="2.6" stroke-linecap="round" stroke-linejoin="round"/></svg>
<div class="a t" style="left:1316.5px;top:196.97px;font-size:19.2px;line-height:24.96px;color:#5a5a5a;font-weight:700;font-family:'Liberation Sans';letter-spacing:1.2px;">Already Implemented)</div>
<div class="a t" style="left:1042.5px;top:265.99px;font-size:17.7px;line-height:23.01px;color:#616161;font-weight:400;font-family:'Liberation Mono';transform:scaleY(1.12);transform-origin:0 16.21px;"><span style="color:#2e8d2e"># Your current configuration already enforces</span></div>
<div class="a t" style="left:1042.5px;top:290.99px;font-size:17.7px;line-height:23.01px;color:#616161;font-weight:400;font-family:'Liberation Mono';transform:scaleY(1.12);transform-origin:0 16.21px;"><span style="color:#000">public_access_prevention = </span><span style="color:#a31515">&quot;enforced&quot;</span></div>
<div class="a t" style="left:1031px;top:355.37px;font-size:19.2px;line-height:24.96px;color:#5a5a5a;font-weight:700;font-family:'Liberation Sans';letter-spacing:0.64px;">Uniform Bucket-Level Access (</div>
<div class="a" style="left:1333px;top:358.5px;width:19px;height:19px;border-radius:4px;background:linear-gradient(#4cc24f,#2f9e35)"></div>
<svg class="a" style="left:1333px;top:358.5px" width="19" height="19" viewBox="0 0 19 19"><path d="M4 9.8 L7.8 13.6 L15 5.2" fill="none" stroke="#fff" stroke-width="2.6" stroke-linecap="round" stroke-linejoin="round"/></svg>
<div class="a t" style="left:1358.5px;top:355.37px;font-size:19.2px;line-height:24.96px;color:#5a5a5a;font-weight:700;font-family:'Liberation Sans';letter-spacing:1.25px;">Already Implemented)</div>
<div class="a t" style="left:1042.5px;top:424.29px;font-size:17.7px;line-height:23.01px;color:#616161;font-weight:400;font-family:'Liberation Mono';transform:scaleY(1.12);transform-origin:0 16.21px;"><span style="color:#2e8d2e"># Your current configuration already enforces</span></div>
<div class="a t" style="left:1042.5px;top:449.09px;font-size:17.7px;line-height:23.01px;color:#616161;font-weight:400;font-family:'Liberation Mono';transform:scaleY(1.12);transform-origin:0 16.21px;"><span style="color:#000">uniform_bucket_level_access = </span><span style="color:#1a28c0">true</span></div>
<div class="a t" style="left:1031px;top:510.67px;font-size:19.2px;line-height:24.96px;color:#5a5a5a;font-weight:700;font-family:'Liberation Sans';letter-spacing:0.3px;">2. Encryption Policies</div>
<div class="a t" style="left:1031px;top:548.07px;font-size:19px;line-height:24.7px;color:#616161;font-weight:400;font-family:'Liberation Sans';letter-spacing:0.5px;">Add encryption requirements to your</div>
<div class="a" style="left:1364.3px;top:546.3px;width:134px;height:25.5px;background:#fff;border:1.3px solid #f0f0f0;border-radius:4px"></div>
<svg class="a" style="left:1371px;top:552.5px" width="12.00" height="13.50" viewBox="0 0 64 72"><path d="M1 1 V23.1 L20.2 34.2 V12.1Z M22.5 13.3 L41.7 24.4 V46.5 L22.5 35.4Z M43.8 24.4 V46.5 L63 35.4 V13.3Z M22.5 37.8 V59.9 L41.7 71 V48.9Z" fill="#9066c9"/></svg>
<div class="a t" style="left:1391.5px;top:548.07px;font-size:19px;line-height:24.7px;color:#616161;font-weight:400;font-family:'Liberation Sans';letter-spacing:0.3px;">variables.tf</div>
<div class="a t" style="left:1031px;top:576.57px;font-size:19px;line-height:24.7px;color:#616161;font-weight:400;font-family:'Liberation Sans';letter-spacing:0.3px;">Encryption Keys (CMEK):</div>
<svg class="a" style="left:1037px;top:637px;" width="17" height="13" viewBox="0 0 17 13"><path d="M1.5 6.5 L6 11 L15.5 1.5" fill="none" stroke="#5aa469" stroke-width="1.4"/></svg>
<div class="a t" style="left:1064.5px;top:632.06px;font-size:18px;line-height:23.4px;color:#8a8a8a;font-weight:400;font-family:'Liberation Sans';letter-spacing:0.35px;">Created</div>
<div class="a" style="left:1137px;top:629.8px;width:192px;height:25.5px;background:#fff;border:1.3px solid #f0f0f0;border-radius:4px"></div>
<svg class="a" style="left:1143.5px;top:636px" width="12.00" height="13.50" viewBox="0 0 64 72"><path d="M1 1 V23.1 L20.2 34.2 V12.1Z M22.5 13.3 L41.7 24.4 V46.5 L22.5 35.4Z M43.8 24.4 V46.5 L63 35.4 V13.3Z M22.5 37.8 V59.9 L41.7 71 V48.9Z" fill="#9066c9"/></svg>
<div class="a t" style="left:1163px;top:631.47px;font-size:18.6px;line-height:24.18px;color:#8a8a8a;font-weight:400;font-family:'Liberation Sans';letter-spacing:0.12px;">security_policies.tf</div>
<div class="a t" style="left:1031px;top:673.27px;font-size:19px;line-height:24.7px;color:#616161;font-weight:400;font-family:'Liberation Sans';letter-spacing:0.45px;">Let me fix the variables and create a proper security policy file with</div>
<div class="a t" style="left:1031px;top:701.37px;font-size:19px;line-height:24.7px;color:#616161;font-weight:400;font-family:'Liberation Sans';letter-spacing:0.4px;">the missing variables:</div>
<div class="a" style="left:1030.7px;top:751px;width:191px;height:29px;background:#fff;border:1.3px solid #ededed;border-radius:5px"></div>
<svg class="a" style="left:1038px;top:757px" width="16.00" height="18.00" viewBox="0 0 64 72"><path d="M1 1 V23.1 L20.2 34.2 V12.1Z M22.5 13.3 L41.7 24.4 V46.5 L22.5 35.4Z M43.8 24.4 V46.5 L63 35.4 V13.3Z M22.5 37.8 V59.9 L41.7 71 V48.9Z" fill="#9066c9"/></svg>
<div class="a t" style="left:1062.5px;top:754.76px;font-size:17.3px;line-height:22.49px;color:#5c5c5c;font-weight:400;font-family:'Liberation Sans';">variables.tf</div>
<div class="a t" style="left:1158.3px;top:754.76px;font-size:17.3px;line-height:22.49px;color:#2b8a3e;font-weight:700;font-family:'Liberation Sans';">+44</div>
<div class="a t" style="left:1197.5px;top:754.76px;font-size:17.3px;line-height:22.49px;color:#b3263a;font-weight:700;font-family:'Liberation Sans';">-0</div>
<svg class="a" style="left:1055px;top:840px;" width="11" height="16" viewBox="0 0 11 16"><path d="M1.8 1.2 L8.5 7.8 L1.8 14.4" fill="none" stroke="#555" stroke-width="1.4"/></svg>
<div class="a t" style="left:1076.5px;top:835.56px;font-size:17.5px;line-height:22.75px;color:#616161;font-weight:400;font-family:'Liberation Sans';">8 files changed</div>
<div class="a t" style="left:1203.5px;top:835.56px;font-size:17.5px;line-height:22.75px;color:#2b8a3e;font-weight:400;font-family:'Liberation Sans';">+898</div>
<div class="a t" style="left:1252.5px;top:835.56px;font-size:17.5px;line-height:22.75px;color:#b3263a;font-weight:400;font-family:'Liberation Sans';">-8</div>
<div class="a" style="left:1030.5px;top:867.8px;width:500px;height:134.5px;background:#fff;border:1.7px solid #62acce;border-radius:6px"></div>
<svg class="a" style="left:1051px;top:882px;" width="14" height="21" viewBox="0 0 14 21"><path d="M4 6 V14.5 Q4 18.5 7 18.5 Q10 18.5 10 14.5 V4.5 Q10 1.8 7.5 1.8 Q5.5 1.8 5.5 4.5 V14 Q5.5 15.5 7 15.5 Q8.5 15.5 8.5 14 V6" fill="none" stroke="#555" stroke-width="1.35"/></svg>
<div class="a t" style="left:1075.5px;top:880.66px;font-size:17px;line-height:22.1px;color:#555555;font-weight:400;font-family:'Liberation Sans';">Add Context...</div>
<svg class="a" style="left:1208.5px;top:884px" width="17.60" height="19.80" viewBox="0 0 64 72"><path d="M1 1 V23.1 L20.2 34.2 V12.1Z M22.5 13.3 L41.7 24.4 V46.5 L22.5 35.4Z M43.8 24.4 V46.5 L63 35.4 V13.3Z M22.5 37.8 V59.9 L41.7 71 V48.9Z" fill="#9066c9"/></svg>
<div class="a t" style="left:1235px;top:880.36px;font-size:17.3px;line-height:22.49px;color:#8a8a8a;font-weight:400;font-family:'Liberation Sans';font-style:italic">main.tf</div>
<svg class="a" style="left:1298px;top:884px;" width="17" height="17" viewBox="0 0 17 17"><path d="M8.5 1 V16 M1 8.5 H16" stroke="#555" stroke-width="1.5"/></svg>
<div class="a" style="left:1040.6px;top:919px;width:1.8px;height:29px;background:#111"></div>
<div class="a t" style="left:1042px;top:922.37px;font-size:19px;line-height:24.7px;color:#8a8a8a;font-weight:400;font-family:'Liberation Sans';letter-spacing:0.45px;">Add context (#), extensions (@), commands (/)</div>
<div class="a t" style="left:1050px;top:964.66px;font-size:17px;line-height:22.1px;color:#5c5c5c;font-weight:400;font-family:'Liberation Sans';">Agent</div>
<svg class="a" style="left:1101px;top:971px;" width="12" height="8" viewBox="0 0 12 8"><path d="M1 1.2 L6 6.2 L11 1.2" fill="none" stroke="#666" stroke-width="1.3"/></svg>
<div class="a t" style="left:1136.5px;top:964.66px;font-size:17px;line-height:22.1px;color:#5c5c5c;font-weight:400;font-family:'Liberation Sans';">Claude Sonnet 4</div>
<svg class="a" style="left:1270px;top:971px;" width="12" height="8" viewBox="0 0 12 8"><path d="M1 1.2 L6 6.2 L11 1.2" fill="none" stroke="#666" stroke-width="1.3"/></svg>
<div class="a" style="left:0px;top:1023px;width:1502px;height:27px;background:#0078d4"></div>
<div class="a" style="left:0px;top:1023px;width:43px;height:27px;background:#178a4f"></div>
<svg class="a" style="left:10px;top:1029px;" width="24" height="18" viewBox="0 0 24 18"><path d="M3 6 L9 11.5 L3 17 M15.5 1.5 L10 6.5 L15.5 11" fill="none" stroke="#c9f5de" stroke-width="1.8"/></svg>
<svg class="a" style="left:55px;top:1029.5px;" width="22" height="22" viewBox="0 0 22 22"><circle cx="10" cy="10" r="8.5" fill="none" stroke="#d8f0ff" stroke-width="1.9"/><path d="M6.3 6.3 L13.7 13.7 M13.7 6.3 L6.3 13.7" stroke="#d8f0ff" stroke-width="1.9"/></svg>
<div class="a t" style="left:81.5px;top:1028.57px;font-size:19px;line-height:24.7px;color:#e2f4ff;font-weight:700;font-family:'Liberation Sans';">1</div>
<svg class="a" style="left:98px;top:1029px;" width="22" height="22" viewBox="0 0 22 22"><path d="M10.5 1.5 L19.5 18.5 H1.5Z" fill="none" stroke="#d8f0ff" stroke-width="1.9" stroke-linejoin="round"/><path d="M10.5 7 V12.8 M10.5 14.6 V16.2" stroke="#d8f0ff" stroke-width="1.9"/></svg>
<div class="a t" style="left:122.5px;top:1028.57px;font-size:19px;line-height:24.7px;color:#e2f4ff;font-weight:700;font-family:'Liberation Sans';">0</div>
<div class="a t" style="left:1203px;top:1028.97px;font-size:18.6px;line-height:24.18px;color:#e6f5ff;font-weight:400;font-family:'Liberation Sans';-webkit-text-stroke:0.35px #e6f5ff">Ln 1, Col 1</div>
<div class="a t" style="left:1317px;top:1028.97px;font-size:18.6px;line-height:24.18px;color:#e6f5ff;font-weight:400;font-family:'Liberation Sans';-webkit-text-stroke:0.35px #e6f5ff">Spaces: 4</div>
<div class="a t" style="left:1423px;top:1028.77px;font-size:18.8px;line-height:24.44px;color:#e6f5ff;font-weight:400;font-family:'Liberation Sans';-webkit-text-stroke:0.35px #e6f5ff">UTF-8</div>
<div class="a" style="left:1499px;top:1033px;width:3px;height:17px;background:#eef6fd"></div>
</body></html>
